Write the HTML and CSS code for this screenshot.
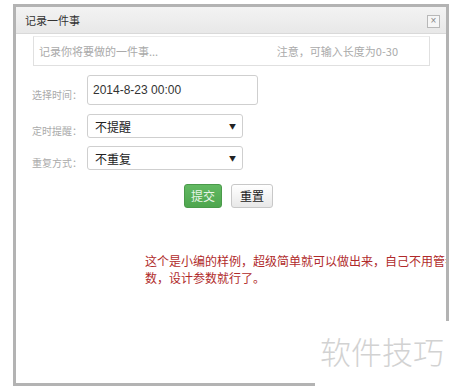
FILE: index.html
```html
<!DOCTYPE html>
<html lang="zh">
<head>
<meta charset="utf-8">
<title>记录一件事</title>
<link rel="stylesheet" href="styles.css">
</head>
<body>
<div class="dialog">
  <div class="titlebar">
    <span class="title">记录一件事</span>
    <span class="close">×</span>
  </div>
  <div class="content">
    <div class="event-input">
      <span class="placeholder">记录你将要做的一件事...</span>
      <span class="hint">注意，可输入长度为0-30</span>
    </div>
    <div class="row">
      <span class="label">选择时间：</span>
      <div class="field date">2014-8-23 00:00</div>
    </div>
    <div class="row">
      <span class="label">定时提醒：</span>
      <div class="field select"><span>不提醒</span><span class="arrow">▼</span></div>
    </div>
    <div class="row row3">
      <span class="label">重复方式：</span>
      <div class="field select"><span>不重复</span><span class="arrow">▼</span></div>
    </div>
    <div class="buttons">
      <span class="btn submit">提交</span>
      <span class="btn reset">重置</span>
    </div>
    <p class="note">这个是小编的样例，超级简单就可以做出来，自己不用管参<br>数，设计参数就行了。</p>
  </div>
</div>
<div class="watermark">软件技巧</div>
</body>
</html>
```
FILE: styles.css
```css
html, body {
  margin: 0;
  padding: 0;
  background: #fff;
  font-family: "Liberation Sans", "Noto Sans CJK SC", sans-serif;
}
body {
  width: 450px;
  height: 388px;
  overflow: hidden;
  position: relative;
}
.dialog {
  margin: 4px 0 0 13px;
  width: 436px;
  height: 382px;
  box-sizing: border-box;
  border: 3px solid #b3b3b3;
  background: #fff;
  overflow: hidden;
}
.titlebar {
  height: 27px;
  box-sizing: border-box;
  border-bottom: 1px solid #d9d9d9;
  background: linear-gradient(#f3f3f3, #e8e8e8);
  display: flex;
  align-items: center;
  justify-content: space-between;
  padding: 0 6px 0 9px;
}
.title {
  font-size: 11px;
  color: #333;
  font-family: "Noto Sans CJK SC", sans-serif;
}
.close {
  width: 11px;
  height: 11px;
  border: 1px solid #b8b8b8;
  background: #f6f6f6;
  color: #888;
  font-size: 10px;
  line-height: 10px;
  text-align: center;
  margin-top: 2px;
}
.content {
  padding: 2px 0 0 16px;
}
.event-input {
  margin-left: 1px;
  width: 397px;
  height: 30px;
  box-sizing: border-box;
  border: 1px solid #e0e0e0;
  border-top-color: #ececec;
  display: flex;
  align-items: center;
  justify-content: space-between;
  padding: 0 31px 0 5px;
  font-size: 11px;
  color: #aaa;
  font-family: "Noto Sans CJK SC", sans-serif;
}
.row {
  display: flex;
  align-items: center;
  margin-top: 9px;
}
.row3 {
  margin-top: 8px;
}
.label {
  width: 55px;
  font-size: 10px;
  color: #aaa;
  padding-top: 8px;
  font-family: "Noto Sans CJK SC", sans-serif;
}
.field {
  box-sizing: border-box;
  border: 1px solid #cfcfcf;
  border-radius: 3px;
  font-size: 12px;
  color: #333;
  display: flex;
  align-items: center;
}
.date {
  width: 171px;
  height: 30px;
  padding-left: 5px;
}
.select {
  width: 156px;
  height: 24px;
  padding: 0 6px 0 7px;
  justify-content: space-between;
  font-family: "Noto Sans CJK SC", sans-serif;
  color: #222;
}
.arrow {
  font-size: 7px;
  color: #222;
}
.buttons {
  display: flex;
  gap: 9px;
  margin: 14px 0 0 152px;
}
.btn {
  height: 24px;
  box-sizing: border-box;
  padding: 0 8px;
  font-size: 12px;
  line-height: 22px;
  border-radius: 3px;
  font-family: "Noto Sans CJK SC", sans-serif;
}
.submit {
  padding: 0 6px;
  background: linear-gradient(#62b962, #4ea64e);
  border: 1px solid #4a9a4a;
  color: #e8f5e8;
}
.reset {
  background: linear-gradient(#ffffff, #e8e8e8);
  border: 1px solid #c8c8c8;
  color: #222;
}
.note {
  margin: 44px 0 0 113px;
  font-size: 12px;
  line-height: 17px;
  color: #b02a2a;
  white-space: nowrap;
  font-family: "Noto Sans CJK SC", sans-serif;
}
.watermark {
  position: absolute;
  left: 315px;
  top: 321px;
  width: 135px;
  height: 67px;
  background: #fff;
  box-sizing: border-box;
  padding: 10px 0 0 5px;
  font-size: 31px;
  line-height: 40px;
  color: #d2d2d2;
  font-family: "Noto Sans CJK SC", sans-serif;
  font-weight: 300;
}
```
